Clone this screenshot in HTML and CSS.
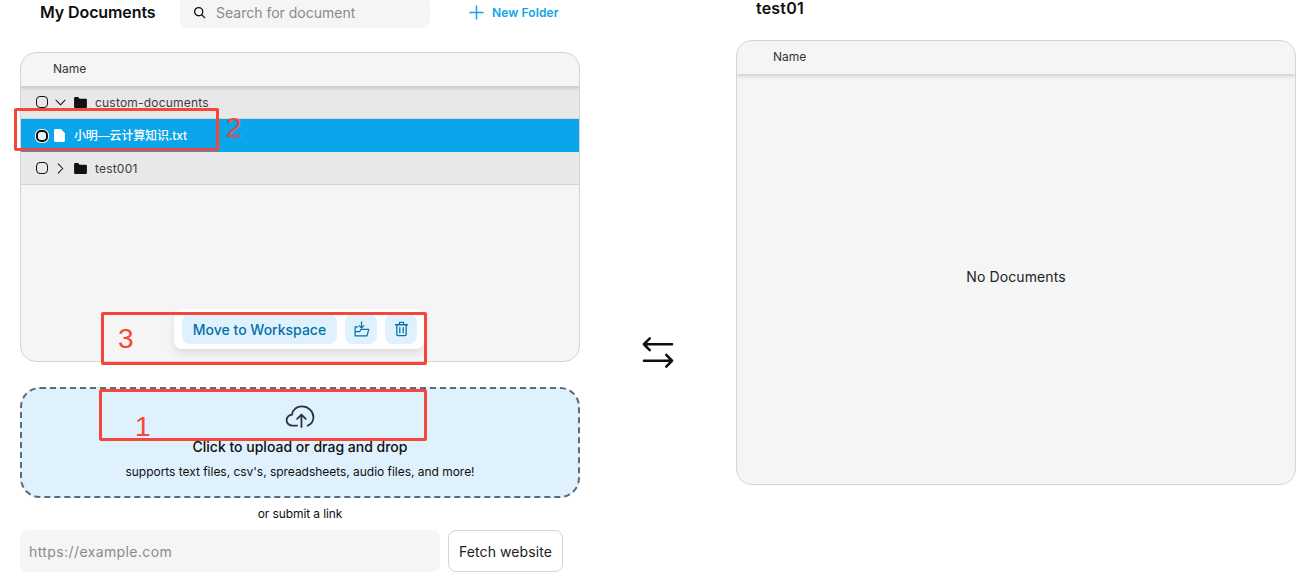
FILE: index.html
```html
<!DOCTYPE html>
<html lang="en">
<head>
  <meta charset="UTF-8">
  <meta name="viewport" content="width=device-width, initial-scale=1.0">
  <title>My Documents</title>
  <link rel="stylesheet" href="styles.css">
</head>
<body>
  <div class="page">
    <!-- Left column -->
    <section class="column column-left">
      <header class="doc-header">
        <h1 class="doc-title">My Documents</h1>
        <div class="search">
          <svg class="search-icon" viewBox="0 0 24 24" fill="none" stroke="currentColor" stroke-width="2.4" stroke-linecap="round"><circle cx="10.5" cy="10.5" r="7.5"/><path d="M16 16l5.5 5.5"/></svg>
          <span class="search-text">Search for document</span>
        </div>
        <button class="new-folder">
          <svg class="plus-icon" viewBox="0 0 16 16" fill="none" stroke="currentColor" stroke-width="1.6" stroke-linecap="round"><path d="M8 1v14M1 8h14"/></svg>
          New Folder
        </button>
      </header>

      <div class="panel panel-left">
        <div class="panel-head">Name</div>
        <div class="row row-folder">
          <span class="check"></span>
          <svg class="chevron" viewBox="0 0 12 12" fill="none" stroke="currentColor" stroke-width="1.1" stroke-linecap="round" stroke-linejoin="round"><path d="M1 3.5l5 5 5-5"/></svg>
          <svg class="folder" viewBox="0 0 14 12" fill="currentColor"><path d="M0 1.5C0 .7.6 0 1.4 0h3l1.6 1.8h6.6c.8 0 1.4.6 1.4 1.4v7.3c0 .8-.6 1.5-1.4 1.5H1.4C.6 12 0 11.300 0 10.500z"/></svg>
          <span class="row-name">custom-documents</span>
        </div>
        <div class="row row-file">
          <span class="check check-on"></span>
          <svg class="file" viewBox="0 0 12 14" fill="currentColor"><path d="M1.500 0H7.500L12 4.500V12.500C12 13.300 11.300 14 10.500 14H1.500C.7 14 0 13.300 0 12.500V1.500C0 .7.7 0 1.500 0z"/></svg>
          <span class="row-name">小明—云计算知识.txt</span>
        </div>
        <div class="row row-folder">
          <span class="check"></span>
          <svg class="chevron" viewBox="0 0 12 12" fill="none" stroke="currentColor" stroke-width="1.1" stroke-linecap="round" stroke-linejoin="round"><path d="M3.500 1l5 5-5 5"/></svg>
          <svg class="folder" viewBox="0 0 14 12" fill="currentColor"><path d="M0 1.5C0 .7.6 0 1.4 0h3l1.6 1.8h6.6c.8 0 1.4.6 1.4 1.4v7.3c0 .8-.6 1.5-1.4 1.5H1.4C.6 12 0 11.300 0 10.500z"/></svg>
          <span class="row-name">test001</span>
        </div>

        <div class="actions">
          <button class="action-btn action-move">Move to Workspace</button>
          <button class="action-btn action-icon">
            <svg viewBox="0 0 20 20" fill="none" stroke="currentColor" stroke-width="1.4" stroke-linecap="round" stroke-linejoin="round"><path d="M10 1.500v7M7.300 6l2.700 2.800L12.700 6"/><path d="M5.500 7.500H2.500V18H16.500L18.500 10.500H9.500L7.800 13H2.500"/></svg>
          </button>
          <button class="action-btn action-icon">
            <svg viewBox="0 0 20 20" fill="none" stroke="currentColor" stroke-width="1.5" stroke-linecap="round" stroke-linejoin="round"><path d="M3 5h14M7.500 4.800V3.200c0-.6.4-1 1-1h3c.6 0 1 .4 1 1v1.600"/><path d="M4.500 5v11.300c0 .9.700 1.500 1.500 1.500h8c.8 0 1.500-.6 1.500-1.500V5"/><path d="M8 8.500v6M12 8.500v6"/></svg>
          </button>
        </div>
      </div>

      <div class="dropzone">
        <svg class="upload-icon" viewBox="0 0 32 24" fill="none" stroke="currentColor" stroke-width="1.9" stroke-linecap="round" stroke-linejoin="round"><path d="M12.500 21.500H7.500C4 21.500 1.500 19 1.500 15.800 1.500 12.700 4 10.200 7 10.200 8.200 5 12.200 1.500 17.500 1.500 24 1.500 29.500 6.500 29.500 12.800 29.500 17 27 20 23.500 21.500"/><path d="M17 23V10.500M12.500 14.500l4.500-4.500 4.500 4.500"/></svg>
        <p class="drop-title">Click to upload or drag and drop</p>
        <p class="drop-sub">supports text files, csv's, spreadsheets, audio files, and more!</p>
      </div>

      <p class="link-label">or submit a link</p>
      <div class="link-row">
        <div class="link-input">https://example.com</div>
        <button class="fetch-btn">Fetch website</button>
      </div>

      <!-- Red annotations drawn on the screenshot -->
      <span class="mark mark-2"></span>
      <span class="mark mark-3"></span>
      <span class="mark mark-1"></span>
      <span class="mark-num num-2">2</span>
      <span class="mark-num num-3">3</span>
      <span class="mark-num num-1">1</span>
    </section>

    <!-- Swap arrows -->
    <div class="swap">
      <svg viewBox="0 0 33 33" fill="none" stroke="currentColor" stroke-width="2.600" stroke-linecap="round" stroke-linejoin="round"><path d="M31 8H2M8 2L2 8l6 6"/><path d="M2 25h29M25 19l6 6-6 6"/></svg>
    </div>

    <!-- Right column -->
    <section class="column column-right">
      <h2 class="ws-title">test01</h2>
      <div class="panel panel-right">
        <div class="panel-head">Name</div>
        <div class="empty">No Documents</div>
      </div>
    </section>
  </div>
</body>
</html>
```

FILE: styles.css
```css
html, body {
  height: 100%;
}

body {
  font-family: Inter, "Noto Sans CJK SC", sans-serif;
  background-color: white;
  color: #0e0f0f;
  margin: 0;
  overflow: hidden;
}

p, h1, h2 {
  margin: 0;
}

button {
  font-family: inherit;
  cursor: pointer;
}

.page {
  display: flex;
  align-items: flex-start;
  height: 588px;
}

.column {
  position: relative;
  flex: none;
}

.column-left {
  width: 560px;
  margin-left: 20px;
}

.column-right {
  width: 560px;
  margin-left: 62px;
}

/* Header */
.doc-header {
  display: flex;
  align-items: center;
  height: 28px;
  margin-top: -2px;
  margin-bottom: 26px;
  padding-left: 20px;
}

.doc-title {
  width: 140px;
  font-size: 16px;
  font-weight: 600;
  letter-spacing: -0.1px;
  white-space: nowrap;
}

.search {
  display: flex;
  align-items: center;
  flex: none;
  width: 250px;
  height: 32px;
  padding-left: 13px;
  box-sizing: border-box;
  background-color: #f5f5f5;
  border-radius: 8px;
}

.search-icon {
  width: 13px;
  height: 13px;
  margin-right: 10px;
}

.search-text {
  font-size: 14px;
  color: #8a8a8a;
}

.new-folder {
  display: flex;
  align-items: center;
  gap: 8px;
  margin-left: 39px;
  padding: 0;
  border: none;
  background: none;
  color: #0ea5e9;
  font-size: 12px;
  font-weight: 600;
  letter-spacing: 0.1px;
  white-space: nowrap;
}

.plus-icon {
  width: 15px;
  height: 15px;
}

/* Panels */
.panel {
  position: relative;
  box-sizing: border-box;
  background-color: #f5f5f5;
  border: 1px solid #d4d4d4;
  border-radius: 16px;
  overflow: hidden;
}

.panel-left {
  height: 310px;
}

.panel-right {
  height: 445px;
  width: 560px;
  display: flex;
  flex-direction: column;
}

.panel-head {
  flex: none;
  height: 33px;
  line-height: 32px;
  padding-left: 32px;
  font-size: 12px;
  color: #333;
  box-shadow: 0 2px 4px rgba(0, 0, 0, 0.16);
  position: relative;
}

.panel-right .panel-head {
  padding-left: 36px;
}

.row {
  display: flex;
  align-items: center;
  height: 33px;
  box-sizing: border-box;
  font-size: 12px;
  padding-left: 15px;
}

.row-folder {
  background-color: #e8e8e8;
  border-bottom: 1px solid #d4d4d4;
  color: #111;
}

.row-folder .row-name {
  color: #3c3c3c;
  letter-spacing: 0.2px;
}

.row-file {
  background-color: #0ba5ec;
  color: white;
  font-weight: 500;
  letter-spacing: -0.15px;
  padding-left: 14px;
}

.row-file .row-name {
  margin-bottom: 3px;
}

.check {
  flex: none;
  width: 10px;
  height: 10px;
  border: 1px solid #111;
  border-radius: 4px;
  background-color: transparent;
}

.check-on {
  width: 8px;
  height: 8px;
  border: 2px solid #111;
  border-radius: 5px;
  margin-left: 1px;
  background-color: #e6f5fd;
  box-shadow: 0 0 0 1px white;
}

.chevron {
  flex: none;
  width: 11px;
  height: 11px;
  margin-left: 7px;
}

.folder {
  flex: none;
  width: 13px;
  height: 11px;
  margin-left: 8px;
  margin-right: 8px;
}

.file {
  flex: none;
  width: 11px;
  height: 13px;
  margin-left: 6px;
  margin-right: 9px;
}

/* Floating action bar */
.actions {
  position: absolute;
  left: 153px;
  top: 256px;
  display: flex;
  align-items: center;
  gap: 8px;
  width: 250px;
  height: 40px;
  box-sizing: border-box;
  padding: 0 7px 0 8px;
  background-color: white;
  border-radius: 8px;
  box-shadow: 0 4px 8px rgba(0, 0, 0, 0.1);
}

.action-btn {
  flex: none;
  height: 30px;
  border: none;
  background-color: #dff1fd;
  color: #0272a8;
  border-radius: 8px;
  padding: 0;
}

.action-move {
  width: 155px;
  font-size: 14px;
  font-weight: 500;
  white-space: nowrap;
}

.action-icon {
  display: flex;
  align-items: center;
  justify-content: center;
  width: 32px;
}

.action-icon svg {
  width: 17px;
  height: 18px;
}

/* Upload */
.dropzone {
  box-sizing: border-box;
  height: 111px;
  margin-top: 25px;
  padding-top: 16px;
  text-align: center;
  background-color: #dff1fd;
  border: 2px dashed #5b6b7a;
  border-radius: 20px;
}

.upload-icon {
  display: block;
  width: 31px;
  height: 23px;
  margin: 0 auto 9px;
  color: #2b3640;
}

.drop-title {
  font-size: 14px;
  font-weight: 500;
  line-height: 20px;
}

.drop-sub {
  margin-top: 7px;
  font-size: 12px;
  line-height: 16px;
  letter-spacing: -0.03px;
}

.link-label {
  margin-top: 8px;
  font-size: 12px;
  line-height: 16px;
  text-align: center;
  letter-spacing: -0.1px;
}

.link-row {
  display: flex;
  gap: 8px;
  margin-top: 8px;
}

.link-input {
  width: 420px;
  height: 42px;
  box-sizing: border-box;
  padding-left: 9px;
  line-height: 43px;
  font-size: 14px;
  letter-spacing: 0.4px;
  color: #8a8a8a;
  background-color: #f5f5f5;
  border-radius: 8px;
}

.fetch-btn {
  width: 115px;
  height: 42px;
  padding: 0;
  background-color: white;
  border: 1px solid #d4d4d4;
  border-radius: 8px;
  font-size: 14px;
  letter-spacing: 0.1px;
  color: #222;
}

/* Swap arrows */
.swap {
  flex: none;
  width: 32px;
  height: 33px;
  margin-top: 336px;
  margin-left: 62px;
}

.swap svg {
  display: block;
  width: 32px;
  height: 33px;
}

/* Right column */
.ws-title {
  height: 21px;
  margin-top: -2px;
  margin-bottom: 21px;
  padding-left: 20px;
  font-size: 16px;
  font-weight: 600;
  line-height: 21px;
  letter-spacing: 0.2px;
}

.empty {
  flex: 1;
  display: flex;
  align-items: center;
  justify-content: center;
  padding-bottom: 6px;
  font-size: 14px;
  letter-spacing: 0.1px;
  color: #222;
}

/* Annotations */
.mark {
  position: absolute;
  box-sizing: border-box;
  border: 3px solid #f4463a;
  border-radius: 2px;
}

.mark-2 {
  left: -6px;
  top: 108px;
  width: 205px;
  height: 43px;
}

.mark-3 {
  left: 81px;
  top: 312px;
  width: 326px;
  height: 53px;
}

.mark-1 {
  left: 79px;
  top: 389px;
  width: 328px;
  height: 52px;
}

.mark-num {
  position: absolute;
  color: #f4463a;
  font-family: "Liberation Sans", sans-serif;
  font-size: 28px;
  line-height: 32px;
}

.num-2 {
  left: 206px;
  top: 112px;
}

.num-3 {
  left: 98px;
  top: 323px;
}

.num-1 {
  left: 115px;
  top: 411px;
}
```
